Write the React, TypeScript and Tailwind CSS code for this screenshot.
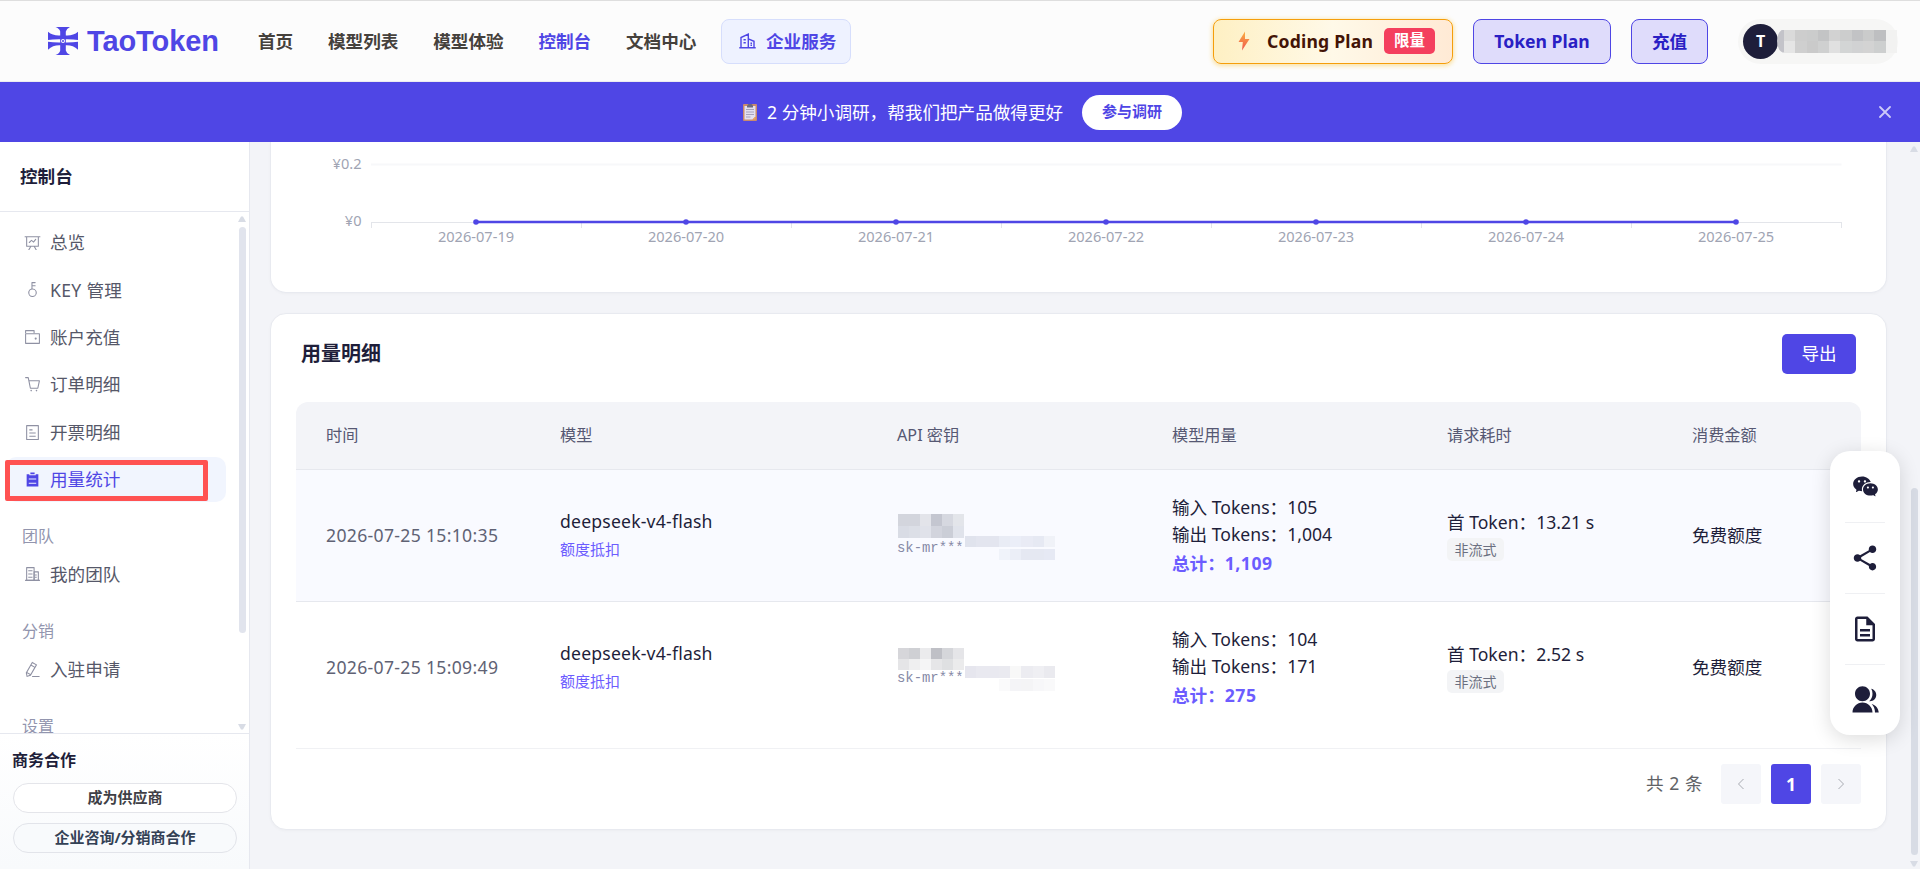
import React from 'react';
import clsx from 'clsx';
import { MdOutlineDescription, MdShare } from 'react-icons/md';
import { RiGroupFill, RiWechatFill } from 'react-icons/ri';

const ICONS = {
  board: [
    'M359.168 768H160a32 32 0 0 1-32-32V192H64a32 32 0 0 1 0-64h896a32 32 0 1 1 0 64h-64v544a32 32 0 0 1-32 32H665.216l110.848 192h-73.856L591.36 768H433.024L322.176 960H248.32zM832 192H192v512h640zM342.656 534.656a32 32 0 1 1-45.312-45.312L444.992 341.76l125.44 94.08L679.04 300.032a32 32 0 1 1 49.92 39.936L581.632 524.224 451.008 426.24z',
  ],
  key: [
    'M448 456.064V96a32 32 0 0 1 32-32.064L672 64a32 32 0 0 1 0 64H512v128h160a32 32 0 0 1 0 64H512v128a256 256 0 1 1-64 8.064M512 896a192 192 0 1 0 0-384 192 192 0 0 0 0 384',
  ],
  wallet: [
    'M640 256h-64V128H128v128H64V96a32 32 0 0 1 32-32h512a32 32 0 0 1 32 32z',
    'M128 320v512h768V320zm-32-64h832a32 32 0 0 1 32 32v576a32 32 0 0 1-32 32H96a32 32 0 0 1-32-32V288a32 32 0 0 1 32-32',
    'M704 640a64 64 0 1 1 0-128 64 64 0 0 1 0 128',
  ],
  cart: [
    'M432 928a48 48 0 1 1 0-96 48 48 0 0 1 0 96m320 0a48 48 0 1 1 0-96 48 48 0 0 1 0 96M96 128a32 32 0 0 1 0-64h160a32 32 0 0 1 31.36 25.728L320.64 256H928a32 32 0 0 1 31.296 38.72l-96 448A32 32 0 0 1 832 768H384a32 32 0 0 1-31.36-25.728L229.76 128zm314.24 576h395.904l82.304-384H333.44z',
  ],
  tickets: [
    'M192 128v768h640V128zm-32-64h704a32 32 0 0 1 32 32v832a32 32 0 0 1-32 32H160a32 32 0 0 1-32-32V96a32 32 0 0 1 32-32m160 448h384v64H320zm0-192h192v64H320zm0 384h384v64H320z',
  ],
  list: ['M704 192h160v736H160V192h160v64h384zM288 512h448v-64H288zm0 256h448v-64H288zm96-576V96h256v96z'],
  building: [
    'M192 128v704h384V128zm-32-64h448a32 32 0 0 1 32 32v768a32 32 0 0 1-32 32H160a32 32 0 0 1-32-32V96a32 32 0 0 1 32-32',
    'M256 256h256v64H256zm0 192h256v64H256zm0 192h256v64H256zm384-128h128v64H640zm0 128h128v64H640zM64 832h896v64H64z',
    'M640 384v448h192V384zm-32-64h256a32 32 0 0 1 32 32v512a32 32 0 0 1-32 32H608a32 32 0 0 1-32-32V352a32 32 0 0 1 32-32',
  ],
  pen: [
    'm199.04 672.64 193.984 112 224-387.968-193.92-112-224 388.032zm-23.872 60.16 32.896 148.288 144.896-45.696zM455.04 229.248l193.92 112 56.704-98.112-193.984-112zM104.32 708.8l384-665.024 304.768 175.936L409.152 884.8h.064l-248.448 78.336zm384 254.272v-64h448v64z',
  ],
};

type IconName = keyof typeof ICONS;

const MenuIcon: React.FC<{ name: IconName; className?: string }> = ({ name, className }) => (
  <svg viewBox="0 0 1024 1024" fill="currentColor" fillRule="evenodd" className={clsx('size-[17px] shrink-0', className)}>
    {ICONS[name].map((d) => (
      <path key={d} d={d} />
    ))}
  </svg>
);

interface MenuEntry {
  icon: IconName;
  label: string;
  active?: boolean;
}

const MENU: { title?: string; items: MenuEntry[] }[] = [
  {
    items: [
      { icon: 'board', label: '总览' },
      { icon: 'key', label: 'KEY 管理' },
      { icon: 'wallet', label: '账户充值' },
      { icon: 'cart', label: '订单明细' },
      { icon: 'tickets', label: '开票明细' },
      { icon: 'list', label: '用量统计', active: true },
    ],
  },
  { title: '团队', items: [{ icon: 'building', label: '我的团队' }] },
  { title: '分销', items: [{ icon: 'pen', label: '入驻申请' }] },
  { title: '设置', items: [] },
];

const NAV = ['首页', '模型列表', '模型体验', '控制台', '文档中心'];

const DATES = ['2026-07-19', '2026-07-20', '2026-07-21', '2026-07-22', '2026-07-23', '2026-07-24', '2026-07-25'];

const COLUMNS = ['时间', '模型', 'API 密钥', '模型用量', '请求耗时', '消费金额'];

const GRID = 'grid grid-cols-[234px_337px_275px_275px_245px_1fr] pl-[30px]';

// blocks that hide the key name and the tail of the key
const ROWS = [
  {
    time: '2026-07-25 15:10:35',
    input: '105',
    output: '1,004',
    total: '1,109',
    first: '13.21 s',
    highlighted: true,
    nameMask: ['bg-[#d3d5dd]', 'bg-[#d3d5dd]', 'bg-[#e3e4ea]', 'bg-[#c4c6d0]', 'bg-[#d6d8e0]', 'bg-[#e3e5ea]', 'bg-[#d9dce5]', 'bg-[#dcdfe7]', 'bg-[#e0e2ea]', 'bg-[#d2d4dd]', 'bg-[#cbced7]', 'bg-[#e0e3eb]'],
    keyMask: ['bg-[#e0e3ed]', 'bg-[#e3e5ef]', 'bg-[#e3e5ef]', 'bg-[#e9ecf5]', 'bg-[#ebeef8]', 'bg-[#e9ebf5]', 'bg-[#e6e9f3]', 'bg-[#f0f2f8]', '', '', '', 'bg-[#f0f3fa]', 'bg-[#ebeef7]', 'bg-[#e5e8f2]', 'bg-[#e5e8f2]', 'bg-[#e6e9f4]'],
  },
  {
    time: '2026-07-25 15:09:49',
    input: '104',
    output: '171',
    total: '275',
    first: '2.52 s',
    highlighted: false,
    nameMask: ['bg-[#d6d6da]', 'bg-[#cfd0d4]', 'bg-[#ebebed]', 'bg-[#bfc0c6]', 'bg-[#d5d6da]', 'bg-[#e5e5e8]', 'bg-[#e5e5e7]', 'bg-[#efeff0]', 'bg-[#f5f5f6]', 'bg-[#e6e6e8]', 'bg-[#dfe0e2]', 'bg-[#ebebec]'],
    keyMask: ['bg-[#e6e6ee]', 'bg-[#e9e9f0]', 'bg-[#e9e9f0]', 'bg-[#eaeaf0]', 'bg-[#f8f8f8]', 'bg-[#ececf1]', 'bg-[#efeff3]', 'bg-[#eaeaef]', '', '', '', 'bg-[#fafafb]', 'bg-[#f4f4f7]', 'bg-[#f4f4f6]', 'bg-[#f7f7f9]', 'bg-[#f9f9fa]'],
  },
];

const USER_MASK = [
  'bg-[#dadada]', 'bg-[#cdcdcd]', 'bg-[#cbcccc]', 'bg-[#c3c4c5]', 'bg-[#d2d2d2]', 'bg-[#cccdcd]', 'bg-[#c2c3c5]', 'bg-[#cacbcb]', 'bg-[#bebfc1]', 'bg-[#f2f2f1]',
  'bg-[#e5e5e5]', 'bg-[#cfcfcf]', 'bg-[#cacaca]', 'bg-[#cfd0d0]', 'bg-[#e0e0e0]', 'bg-[#d3d5d5]', 'bg-[#d1d2d3]', 'bg-[#d3d3d3]', 'bg-[#cdcfcf]', 'bg-[#f2f2f1]',
];

const Logo = () => (
  <div className="flex items-center gap-[9px] text-[#4f46e5]">
    <svg viewBox="0 0 30 28" className="h-7 w-[30px]" fill="currentColor">
      <path d="M7.5 0h14.500Q18.500 1.500 17.800 4.500V8.500Q25 9 30 4.800V12.900Q24 12 15 12.300Q6 12 0 12.900V4.800Q5 9 12.200 8.500V4.500Q11.500 1.500 7.500 0Z" />
      <path d="M7.500 28h14.500Q18.500 26.500 17.800 23.500V18.300Q25 18 30 22.700V14.800Q24 15.800 15 15.500Q6 15.800 0 14.800V22.700Q5 18 12.200 18.300V23.500Q11.500 26.500 7.500 28Z" />
      <path d="M12.200 12h5.600v4h-5.600z" />
      <circle cx="15" cy="14" r="2" fill="#fcfcfc" />
      <circle cx="15" cy="14" r="1" />
    </svg>
    <span className="w-[132px] whitespace-nowrap font-['Liberation_Sans',Arial,sans-serif] text-[29px] leading-8 font-bold tracking-[-0.1px]">TaoToken</span>
  </div>
);

const Header = () => (
  <header className="flex h-[82px] shrink-0 items-center border-t border-b border-t-[#dedede] border-b-[#ececf0] bg-[#fcfcfc] pl-12">
    <Logo />
    <nav className="ml-[39px] flex items-center gap-[34.800px] text-[17.6px] font-bold text-[#45413c]">
      {NAV.map((label) => (
        <a key={label} className={clsx(label === '控制台' && 'text-[#4f46e5]')}>
          {label}
        </a>
      ))}
    </nav>
    <a className="ml-[24.600px] flex h-[45px] w-[130px] items-center gap-[10px] rounded-lg border border-[#d6defc] bg-[#eef2ff] pl-[17px] text-[17.6px] font-bold whitespace-nowrap text-[#4f46e5]">
      <svg viewBox="0 0 17 16" className="h-4 w-[17px]" fill="none" stroke="currentColor" strokeWidth="1.4">
        <path d="M.3 14.700h16.400M2 14.700V4.500L9.300 1.200V14.700M9.300 5.800l5.700 2.500v6.400M4.500 6.700h2.300M4.500 9.700h2.300M11.500 10.200h1.500M11.500 12.200h1.500" />
      </svg>
      企业服务
    </a>
    <div className="ml-auto flex items-center">
      <a className="mr-5 flex h-[45px] w-60 items-center rounded-lg border border-[#f59e0b] bg-linear-to-r from-[#fef0c3] via-[#fff9e8] to-[#ffead5] pl-[23px] shadow-[0_1px_4px_1px_rgba(251,191,36,0.4)]">
        <svg viewBox="0 0 14 20" className="h-5 w-[14px]">
          <defs>
            <linearGradient id="bolt" x1="0" y1="0" x2="0" y2="1">
              <stop offset="0" stopColor="#fbb040" />
              <stop offset="1" stopColor="#ef5350" />
            </linearGradient>
          </defs>
          <path d="M8 .5 1.500 11h4.300L5 19.500 12.500 8H8z" fill="url(#bolt)" />
        </svg>
        <span className="ml-4 w-[108px] text-[17.6px] font-bold tracking-[0.200px] whitespace-nowrap text-[#431407]">Coding Plan</span>
        <span className="ml-[9px] flex h-[26px] w-[51px] items-center justify-center rounded-[5px] bg-[#f43f5e] text-[15.500px] font-bold text-white">限量</span>
      </a>
      <a className="mr-5 flex h-[45px] w-[138px] items-center justify-center rounded-lg border border-[#4f46e5] bg-[#dfdcfb] text-[17.6px] font-bold whitespace-nowrap text-[#2a1fc4]">
        Token Plan
      </a>
      <a className="mr-[30px] flex h-[45px] w-[77px] items-center justify-center rounded-lg border border-[#4f46e5] bg-[#dfdcfb] text-[17.6px] font-bold text-[#2a1fc4]">充值</a>
      <div className="mr-[22px] flex h-[45px] w-40 items-center rounded-full bg-[#f6f6f5] pl-[5px]">
        <div className="flex size-[35px] shrink-0 items-center justify-center rounded-full bg-[#1e1e3a] text-[16px] font-bold text-white">T</div>
        <div className="-ml-px h-[23px] w-[7px] bg-[#c3c3c9] [clip-path:ellipse(100%_50%_at_100%_50%)]" />
        <div className="grid shrink-0 grid-cols-[repeat(10,11.300px)]">
          {USER_MASK.map((color, i) => (
            <div key={i} className={clsx('h-[11.500px]', color)} />
          ))}
        </div>
      </div>
    </div>
  </header>
);

const Banner = () => (
  <div className="relative flex h-[60px] shrink-0 items-center bg-[#4f46e5] pl-[742px] text-white">
    <svg viewBox="0 0 16 18" className="h-[18px] w-4">
      <rect x="1" y="1" width="14" height="17" rx="1" fill="#c98a6c" />
      <path d="M2.500 3h11v10.500l-3 3h-8z" fill="#e4e0f0" />
      <path d="M13.500 13.500v3h-3z" fill="#f2a65a" />
      <path d="M4 6.500h8M4 9h8M4 11.500h8M4 14h4.500" stroke="#a7a2bd" strokeWidth="1" />
      <path d="M5 4.500V2.500L6.500 1h3L11 2.500v2z" fill="#6c6880" />
    </svg>
    <span className="ml-[9px] w-[296px] text-[17.6px] whitespace-nowrap">2 分钟小调研，帮我们把产品做得更好</span>
    <button className="ml-[19px] h-[35px] w-[100px] rounded-full bg-white pb-0.5 text-[15px] font-bold text-[#4f46e5]">参与调研</button>
    <svg viewBox="0 0 12 12" className="mr-[29px] ml-auto size-3" stroke="#cdcaf8" strokeWidth="1.8" strokeLinecap="round">
      <path d="M1 1l10 10M11 1L1 11" />
    </svg>
  </div>
);

// narrow scrollbar with an arrow at each end
const Scrollbar: React.FC<{ className: string; before: string; thumb: string; after: string }> = ({ className, before, thumb, after }) => (
  <div className={clsx('flex w-2 flex-col items-center', className)}>
    <svg viewBox="0 0 8 6" className="h-1.5 w-2 shrink-0 fill-[#d8dce5]">
      <path d="M3 .5h2L8 6H0z" />
    </svg>
    <div className={clsx('shrink-0', before)} />
    <div className={clsx('w-[7px] shrink-0 rounded-full', thumb)} />
    <div className={clsx('shrink-0', after)} />
    <svg viewBox="0 0 8 6" className="h-1.5 w-2 shrink-0 fill-[#d8dce5]">
      <path d="M0 0h8L5 5.500H3z" />
    </svg>
  </div>
);

const Sidebar = () => (
  <aside className="flex w-[250px] shrink-0 flex-col border-r border-[#e6e8ef] bg-white">
    <div className="flex h-[70px] shrink-0 items-center border-b border-[#e6e8ef] pl-5 text-[17.6px] font-bold text-[#1e1e3a]">控制台</div>
    <div className="relative h-[521px] shrink-0 overflow-hidden pt-[8px] pr-[23px] pl-1.5">
      {MENU.map((group, g) => (
        <div key={g}>
          {group.title && <div className="mt-[22.400px] mb-[3.500px] h-6 pl-4 text-base leading-6 text-[#9295ae]">{group.title}</div>}
          {group.items.map((item) => (
            <a
              key={item.label}
              className={clsx(
                'mb-[2.400px] flex h-[45px] items-center rounded-[10px] pl-[18px] text-[17.6px]',
                item.active ? 'bg-[#f1f5fe] text-[#4f46e5]' : 'text-[#565869]',
              )}
            >
              <MenuIcon name={item.icon} className={item.active ? 'text-[#4f46e5]' : 'text-[#8f91a3]'} />
              <span className={clsx('ml-[9px]', item.icon === 'key' && 'tracking-[0.300px]')}>{item.label}</span>
            </a>
          ))}
        </div>
      ))}
      <div className="absolute top-[248px] left-[5px] h-[41px] w-[203px] rounded-[2px] border-[5px] border-[#ff5252]" />
      <Scrollbar className="absolute top-1 right-[3px]" before="h-[5px]" thumb="h-[406px] bg-[#e1e4ed]" after="h-[91px]" />
    </div>
    <div className="flex grow flex-col border-t border-[#e6e8ef] bg-linear-to-b from-white to-[#f8fafc] px-3 pt-[14px] font-bold">
      <div className="h-6 text-base leading-6 text-[#1e1e3a]">商务合作</div>
      <button className="mt-[11px] ml-px h-[30px] w-56 shrink-0 rounded-full border border-[#e4e5ea] bg-white pb-0.5 text-[15px] text-[#3f3f46]">成为供应商</button>
      <button className="mt-[10px] ml-px h-[30px] w-56 shrink-0 rounded-full border border-[#e2e4ea] bg-[#f8fafc] pb-0.5 text-[15px] text-[#334155]">企业咨询/分销商合作</button>
    </div>
  </aside>
);

const UsageChart = () => (
  <section className="h-[151px] shrink-0 rounded-b-2xl border border-t-0 border-[#e8eaf0] bg-white shadow-[0_1px_3px_rgba(0,0,0,0.03)]">
    <svg viewBox="271 142 1614 149" className="h-[149px] w-[1614px] text-[14.600px]" fill="#a0a4b3">
      <path d="M371 164.500h1470.500" stroke="#f7f8fa" strokeWidth="2" />
      <path d="M371 222.500h1471" stroke="#e3e5ea" strokeWidth="1" />
      {[...DATES, 'end'].map((date, i) => (
        <path key={date} d={`M${Math.round(371 + i * 210.070) + 0.5} 222v6`} stroke="#e3e5ea" />
      ))}
      <text x="361.500" y="169" textAnchor="end">¥0.2</text>
      <text x="361.500" y="226" textAnchor="end">¥0</text>
      <path d="M476 222h1260" stroke="#4f46e5" strokeWidth="2.500" />
      {DATES.map((date, i) => (
        <g key={date}>
          <circle cx={476 + i * 210} cy="222" r="2.800" fill="#4f46e5" />
          <text x={476 + i * 210} y="242" textAnchor="middle">{date}</text>
        </g>
      ))}
    </svg>
  </section>
);

const UsageTable = () => (
  <section className="h-[517px] shrink-0 rounded-2xl border border-[#e8eaf0] bg-white pr-[25px] pl-[25px] shadow-[0_1px_3px_rgba(0,0,0,0.03)]">
    <div className="flex h-[88px] items-center justify-between pr-[5px] pb-2 pl-[5px]">
      <h2 className="text-[20px] font-bold text-[#1e1e3a]">用量明细</h2>
      <button className="h-10 w-[74px] rounded-[5px] bg-[#4f46e5] pb-0.5 text-[17.6px] text-white">导出</button>
    </div>
    <div className={clsx(GRID, 'h-[68px] items-center rounded-t-xl border-b border-[#e6e8ee] bg-[#f3f4f8] pb-px text-[16.200px] text-[#565873]')}>
      {COLUMNS.map((name) => (
        <div key={name}>{name}</div>
      ))}
    </div>
    {ROWS.map((row) => (
      <div
        key={row.time}
        className={clsx(GRID, 'items-center text-[17.6px] text-[#1e1e3a]', row.highlighted ? 'h-[132px] border-b border-[#e6e8ee] bg-[#f9faff]' : 'h-[130px]')}
      >
        <div className="tracking-[0.320px] text-[#606274]">{row.time}</div>
        <div className="pb-[3px]">
          <div className="h-7 leading-7 tracking-[0.200px]">deepseek-v4-flash</div>
          <div className="mt-0.5 h-6 text-[15px] leading-6 text-[#6c5cff]">额度抵扣</div>
        </div>
        <div className="pt-1">
          <div className={clsx('ml-px grid w-[66px] grid-cols-6', !row.highlighted && '-mb-0.5 pt-0.5')}>
            {row.nameMask.map((color, i) => (
              <div key={i} className={clsx(row.highlighted ? 'h-3' : 'h-[11px]', color)} />
            ))}
          </div>
          <div className="flex h-6">
            <span className="w-[68px] overflow-hidden font-['Liberation_Mono',monospace] text-[13.900px] leading-[20px] text-[#8589a6]">sk-mr***</span>
            <div className="-mt-0.5 grid w-[90px] grid-cols-8">
              {row.keyMask.map((color, i) => (
                <div key={i} className={clsx('h-[11.500px]', color)} />
              ))}
            </div>
          </div>
        </div>
        <div className="leading-[27px]">
          <div>输入 Tokens：{row.input}</div>
          <div>输出 Tokens：{row.output}</div>
          <div className="mt-[2px] font-bold text-[#6c5cff]">
            总计：<span className="tracking-[0.500px]">{row.total}</span>
          </div>
        </div>
        <div className="pb-0.5">
          <div className="h-7 leading-7">首 Token：{row.first}</div>
          <div className="mt-0.5 flex h-[23px] w-[57px] items-center justify-center rounded-[5px] bg-[#f3f4f6] text-[14px] text-[#6b7080]">非流式</div>
        </div>
        <div>免费额度</div>
      </div>
    ))}
    <div className="mt-4 flex items-center justify-end border-t border-[#f0f1f4] pt-[15px]">
      <span className="mr-[18px] pb-px text-[17.6px] tracking-[0.500px] text-[#606266]">共 2 条</span>
      <button className="flex size-10 items-center justify-center rounded-[3px] bg-[#f5f6fa]">
        <svg viewBox="0 0 8 12" className="h-3 w-2" fill="none" stroke="#a8abb2">
          <path d="M6.500 1 1.500 6l5 5" />
        </svg>
      </button>
      <button className="ml-[10px] size-10 rounded-[3px] bg-[#4f46e5] text-[17.6px] font-bold text-white">1</button>
      <button className="ml-[10px] flex size-10 items-center justify-center rounded-[3px] bg-[#f5f6fa]">
        <svg viewBox="0 0 8 12" className="h-3 w-2" fill="none" stroke="#a8abb2">
          <path d="M1.500 1l5 5-5 5" />
        </svg>
      </button>
    </div>
  </section>
);

const TOOLS = [
  { name: 'wechat', icon: <RiWechatFill size={27} /> },
  { name: 'share', icon: <MdShare size={30} /> },
  { name: 'docs', icon: <MdOutlineDescription size={30} /> },
  { name: 'group', icon: <RiGroupFill size={30} /> },
];

const FloatingTools = () => (
  <div className="absolute top-[451px] right-5 flex h-[284px] w-[70px] flex-col rounded-[20px] bg-white px-[15px] text-[#1e1e3a] shadow-[0_4px_20px_rgba(0,0,0,0.14)]">
    {TOOLS.map((tool, i) => (
      <div key={tool.name} className={clsx('flex h-[71px] w-10 items-center justify-center', i > 0 && 'border-t border-[#eff0f3]')}>
        {tool.icon}
      </div>
    ))}
  </div>
);

export default function App() {
  return (
    <div className="relative flex h-[869px] w-[1920px] flex-col overflow-hidden bg-[#f3f4f8] font-['Noto_Sans','Noto_Sans_CJK_SC',sans-serif]">
      <Header />
      <Banner />
      <div className="flex min-h-0 grow">
        <Sidebar />
        <main className="flex w-[1637px] flex-col gap-5 pl-5">
          <UsageChart />
          <UsageTable />
        </main>
        <Scrollbar className="mt-1 mr-0.5 ml-auto" before="h-[336px]" thumb="h-[367px] bg-[#d8dce5]" after="h-[6px]" />
      </div>
      <FloatingTools />
    </div>
  );
}
